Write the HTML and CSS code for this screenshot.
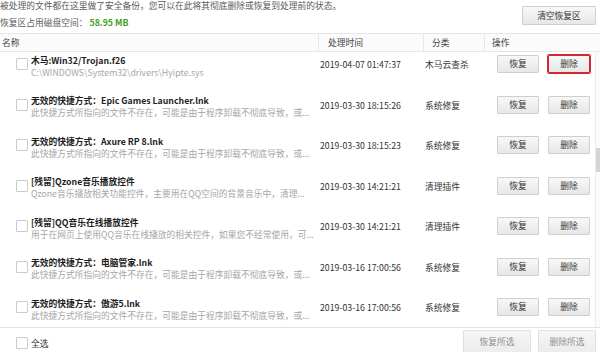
FILE: index.html
```html
<!DOCTYPE html>
<html lang="zh-CN">
<head>
<meta charset="utf-8">
<link rel="stylesheet" href="styles.css">
</head>
<body>
<div class="page">
  <div class="top">
    <div class="info">
      <div class="line">被处理的文件都在这里做了安全备份，您可以在此将其彻底删除或恢复到处理前的状态。</div>
      <div class="line">恢复区占用磁盘空间：<b class="size">58.95 MB</b></div>
    </div>
    <button class="btn clear">清空恢复区</button>
  </div>

  <div class="header">
    <div class="h h-name">名称</div>
    <div class="h h-time">处理时间</div>
    <div class="h h-cat">分类</div>
    <div class="h h-ops">操作</div>
  </div>

  <div class="listwrap">
    <div class="list">
      <div class="row">
        <span class="cb"></span>
        <div class="name"><div class="title">木马:Win32/Trojan.f26</div><div class="sub">C:\WINDOWS\System32\drivers\Hyipte.sys</div></div>
        <div class="time">2019-04-07 01:47:37</div>
        <div class="cat">木马云查杀</div>
        <div class="ops"><button class="btn op">恢复</button><button class="btn op mark">删除</button></div>
      </div>
      <div class="row">
        <span class="cb"></span>
        <div class="name"><div class="title">无效的快捷方式：Epic Games Launcher.lnk</div><div class="sub">此快捷方式所指向的文件不存在，可能是由于程序卸载不彻底导致，或...</div></div>
        <div class="time">2019-03-30 18:15:26</div>
        <div class="cat">系统修复</div>
        <div class="ops"><button class="btn op">恢复</button><button class="btn op">删除</button></div>
      </div>
      <div class="row">
        <span class="cb"></span>
        <div class="name"><div class="title">无效的快捷方式：Axure RP 8.lnk</div><div class="sub">此快捷方式所指向的文件不存在，可能是由于程序卸载不彻底导致，或...</div></div>
        <div class="time">2019-03-30 18:15:23</div>
        <div class="cat">系统修复</div>
        <div class="ops"><button class="btn op">恢复</button><button class="btn op">删除</button></div>
      </div>
      <div class="row">
        <span class="cb"></span>
        <div class="name"><div class="title">[残留]Qzone音乐播放控件</div><div class="sub">Qzone音乐播放相关功能控件，主要用在QQ空间的背景音乐中，清理...</div></div>
        <div class="time">2019-03-30 14:21:21</div>
        <div class="cat">清理插件</div>
        <div class="ops"><button class="btn op">恢复</button><button class="btn op">删除</button></div>
      </div>
      <div class="row">
        <span class="cb"></span>
        <div class="name"><div class="title">[残留]QQ音乐在线播放控件</div><div class="sub">用于在网页上使用QQ音乐在线播放的相关控件，如果您不经常使用，可...</div></div>
        <div class="time">2019-03-30 14:21:21</div>
        <div class="cat">清理插件</div>
        <div class="ops"><button class="btn op">恢复</button><button class="btn op">删除</button></div>
      </div>
      <div class="row">
        <span class="cb"></span>
        <div class="name"><div class="title">无效的快捷方式：电脑管家.lnk</div><div class="sub">此快捷方式所指向的文件不存在，可能是由于程序卸载不彻底导致，或...</div></div>
        <div class="time">2019-03-16 17:00:56</div>
        <div class="cat">系统修复</div>
        <div class="ops"><button class="btn op">恢复</button><button class="btn op">删除</button></div>
      </div>
      <div class="row">
        <span class="cb"></span>
        <div class="name"><div class="title">无效的快捷方式：傲游5.lnk</div><div class="sub">此快捷方式所指向的文件不存在，可能是由于程序卸载不彻底导致，或...</div></div>
        <div class="time">2019-03-16 17:00:56</div>
        <div class="cat">系统修复</div>
        <div class="ops"><button class="btn op">恢复</button><button class="btn op">删除</button></div>
      </div>
    </div>
    <div class="scroll"><div class="thumb"></div></div>
  </div>

  <div class="footer">
    <label class="all"><span class="cb"></span><span class="all-text">全选</span></label>
    <div class="foot-btns">
      <button class="btn foot restore">恢复所选</button>
      <button class="btn foot del">删除所选</button>
    </div>
  </div>
</div>
</body>
</html>
```

FILE: styles.css
```css
* { box-sizing: border-box; }
html, body {
  margin: 0;
  padding: 0;
  background: #ffffff;
}
body {
  width: 600px;
  height: 352px;
  overflow: hidden;
  font-family: "Noto Sans CJK SC", "Noto Sans", sans-serif;
  font-size: 8.75px;
  color: #333;
}
.page {
  display: flex;
  flex-direction: column;
  width: 600px;
}

/* top info */
.top {
  display: flex;
  justify-content: space-between;
  align-items: flex-start;
  margin-top: -3px;
  height: 34px;
}
.line {
  line-height: 17px;
  height: 17px;
  color: #5a5a5a;
  white-space: nowrap;
}
.size {
  color: #3f9d22;
  font-weight: bold;
  margin-left: 2px;
}

/* buttons */
.btn {
  font-family: inherit;
  font-size: 8.75px;
  color: #333;
  background: linear-gradient(#f8f8f8, #e7e7e7);
  border: 1px solid #cfcfcf;
  border-radius: 1px;
  padding: 0;
  margin: 0;
  line-height: 16px;
  cursor: default;
}
.clear {
  width: 74px;
  height: 19px;
  margin-top: 9px;
  margin-right: 4px;
}

/* header */
.header {
  display: flex;
  height: 19px;
  margin-top: 2px;
  border-top: 1px solid #e6e6e6;
  border-bottom: 1px solid #e6e6e6;
  background: #fbfbfb;
  color: #444;
}
.h {
  line-height: 17px;
  white-space: nowrap;
}
.h-name { width: 318px; padding-left: 2px; }
.h-time { width: 105px; padding-left: 9px; border-left: 1px solid #e8e8e8; }
.h-cat { width: 61px; padding-left: 8px; border-left: 1px solid #e8e8e8; }
.h-ops { flex: 1; padding-left: 7px; border-left: 1px solid #e8e8e8; }

/* list */
.listwrap {
  position: relative;
  height: 275px;
  overflow: hidden;
}
.list {
  display: flex;
  flex-direction: column;
}
.row {
  display: flex;
  align-items: flex-start;
  height: 40.5px;
  flex: 0 0 40.5px;
  padding-left: 16px;
}
.cb {
  display: inline-block;
  width: 12px;
  height: 12px;
  border: 1px solid #cbcbcb;
  background: #fff;
  border-radius: 1px;
  margin-top: 6px;
  flex: 0 0 12px;
}
.name {
  width: 277px;
  margin-left: 3px;
  padding-top: 1.5px;
}
.title {
  font-weight: bold;
  color: #1e1e1e;
  line-height: 13px;
  white-space: nowrap;
}
.sub {
  color: #a6a6a6;
  line-height: 12px;
  white-space: nowrap;
}
.time {
  width: 105px;
  margin-left: 12px;
  margin-top: 4px;
  line-height: 18px;
  color: #333;
  white-space: nowrap;
}
.cat {
  width: 72px;
  margin-top: 4px;
  line-height: 18px;
  color: #333;
  white-space: nowrap;
}
.ops {
  display: flex;
  gap: 9px;
  margin-top: 3px;
}
.op {
  width: 42px;
  height: 18px;
}
.op.mark {
  border: 1px solid #d8262e;
  outline: 1px solid #d8262e;
}

/* scrollbar overlay */
.scroll {
  position: absolute;
  top: 0;
  right: 0;
  width: 5px;
  height: 275px;
  border-left: 1px solid #ececec;
  background: #fbfbfb;
}
.thumb {
  margin-top: 96px;
  height: 24px;
  background: #d4d4d4;
}

/* footer */
.footer {
  display: flex;
  justify-content: space-between;
  align-items: flex-start;
  border-top: 1px solid #e3e3e3;
  height: 25px;
}
.all {
  display: flex;
  align-items: flex-start;
  padding-left: 16px;
}
.all .cb { margin-top: 9px; }
.all-text {
  margin-left: 3px;
  margin-top: 9px;
  line-height: 14px;
  color: #333;
}
.foot-btns {
  display: flex;
  gap: 7px;
  margin-right: 4px;
  margin-top: 2px;
}
.foot {
  height: 24px;
  color: #8f8f8f;
  background: linear-gradient(#f6f6f6, #ececec);
  border-color: #e0e0e0;
}
.restore { width: 68px; }
.del { width: 58px; }
```
